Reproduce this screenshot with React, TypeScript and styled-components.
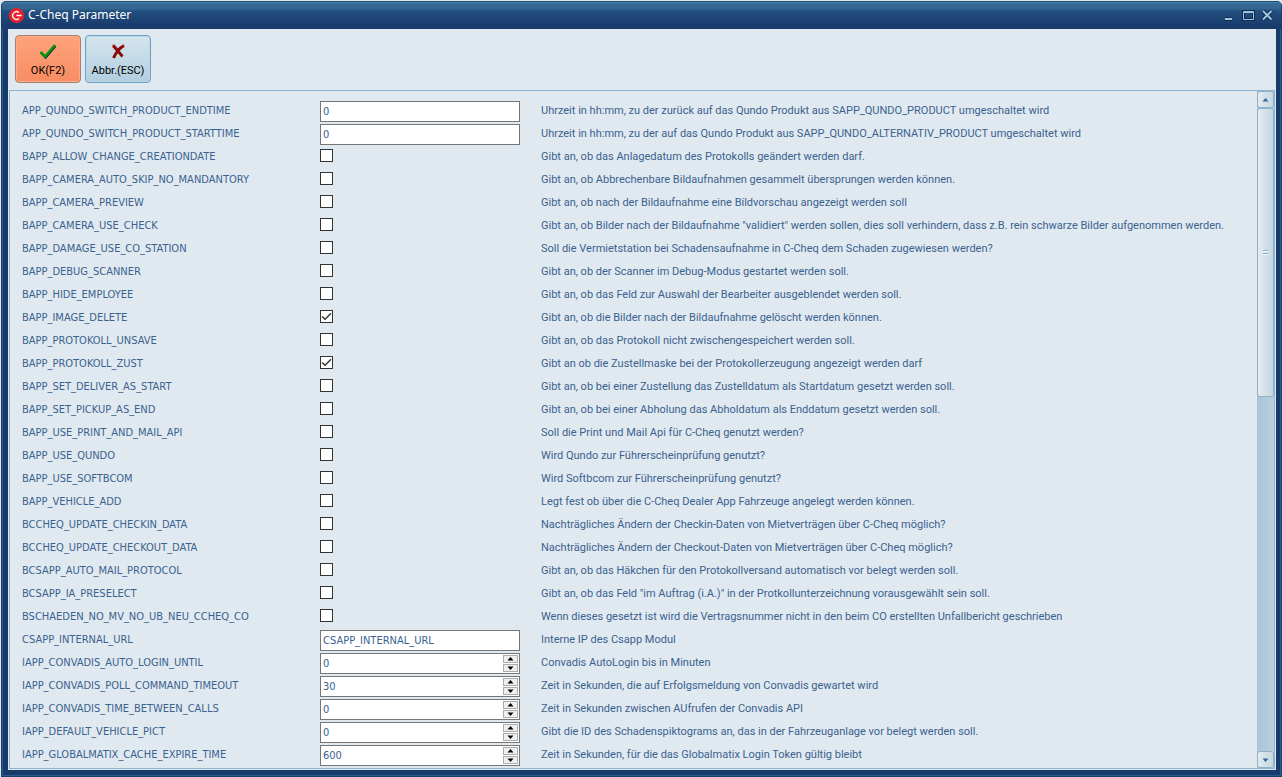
import React, { useState } from 'react';
import styled, { createGlobalStyle, css } from 'styled-components';

const GlobalStyle = createGlobalStyle`
  *, *::before, *::after { box-sizing: border-box; }
  html, body, #root { height: 100%; }
  body { margin: 0; overflow: hidden; background: #dfe8ec; }
`;

const labelFont = css`
  font-family: 'DejaVu Sans Condensed', 'Noto Sans', sans-serif;
  font-size: 11px;
`;

const Desktop = styled.div`
  height: 100vh;
  padding: 1px 0 0 1px;
  background: #dfe8ec;
`;

const Window = styled.section`
  display: flex;
  flex-direction: column;
  height: 100%;
  padding: 0 5px 6px 6px;
  border: 1px solid #17406f;
  border-top-color: #1d4a6c;
  border-radius: 5px 5px 0 0;
  background: #183b6b;
  box-shadow: inset 0 0 0 1px #2a5a8e;
`;

const TitleBar = styled.header`
  display: flex;
  align-items: center;
  flex: none;
  height: 27px;
  margin: 0 -5px 0 -6px;
  padding: 0 4px 2px 7px;
  gap: 4px;
  border-radius: 4px 4px 0 0;
  border-top: 1px solid #4a82a8;
  background: linear-gradient(#376b97 0, #33648f 6px, #234f80 8px, #1b3f70 20px, #1a3a6a 100%);
`;

const Title = styled.h1`
  flex: 1;
  margin: 0;
  color: #fff;
  font: 400 12px/16px 'Noto Sans', sans-serif;
`;

const Captions = styled.div`
  display: flex;
`;

const Caption = styled.button`
  display: flex;
  padding: 0;
  border: 0;
  background: none;
`;

const Body = styled.main`
  display: flex;
  flex-direction: column;
  flex: 1;
  min-height: 0;
  padding-bottom: 1px;
  background: #e1e9f0;
`;

const Toolbar = styled.div`
  display: flex;
  flex: none;
  gap: 4px;
  padding: 6px 7px 7px;
`;

const ToolButton = styled.button<{ $active?: boolean }>`
  display: flex;
  flex-direction: column;
  align-items: center;
  width: 66px;
  height: 48px;
  padding: 8px 0 0;
  gap: 5px;
  border: 1px solid ${p => (p.$active ? '#a97f72' : '#6f9fc3')};
  border-radius: 4px;
  color: #000;
  background: ${p => (p.$active
    ? 'linear-gradient(#fda27c, #fb9870 50%, #f78d62)'
    : 'linear-gradient(#d5e5ee, #c3dae7 50%, #b2cfdf)')};
  box-shadow: inset 0 0 0 1px ${p => (p.$active ? '#fbab8a' : '#bcd8e7')};
  font: 400 11px/14px Roboto, 'Liberation Sans', sans-serif;
`;

const Panel = styled.div`
  display: flex;
  flex: 1;
  min-height: 0;
  margin: 0 1px;
  border: 1px solid #8db3d0;
`;

const Rows = styled.div`
  flex: 1;
  min-width: 0;
  overflow: hidden;
  padding: 8px 0 0 12px;
`;

const Row = styled.div`
  display: grid;
  grid-template-columns: 298px 200px 1fr;
  height: 23px;
  padding-top: 2px;
  line-height: 20px;
  color: #39628f;
  white-space: nowrap;
`;

const Name = styled.label`
  ${labelFont}
`;

const Description = styled.span`
  padding-left: 21px;
  font-family: Roboto, 'Liberation Sans', sans-serif;
  font-size: 11px;
`;

const Field = styled.div`
  display: flex;
  height: 21px;
  border: 1px solid #767676;
  background: #fff;
`;

const TextInput = styled.input`
  flex: 1;
  min-width: 0;
  padding: 0 2px;
  border: 0;
  outline: 0;
  background: none;
  color: #39628f;
  ${labelFont}
  appearance: textfield;
  &::-webkit-inner-spin-button { appearance: none; margin: 0; }
`;

const Spinner = styled.div`
  display: flex;
  flex-direction: column;
  gap: 1px;
  padding: 1px;
`;

const SpinButton = styled.button`
  display: flex;
  align-items: center;
  justify-content: center;
  flex: 1;
  width: 15px;
  padding: 0;
  border: 1px solid #acacac;
  background: #efefef;
`;

const Check = styled.input`
  appearance: none;
  width: 13px;
  height: 13px;
  margin: 2px 0 0;
  border: 1px solid #333;
  background: #fff;
  &:checked {
    background: #fff url("data:image/svg+xml,%3Csvg xmlns='http://www.w3.org/2000/svg' viewBox='0 0 11 11'%3E%3Cpath d='M1 5.500 4 8.300 10 2.200' fill='none' stroke='%23333' stroke-width='1.4'/%3E%3C/svg%3E");
  }
`;

const Scrollbar = styled.div`
  display: flex;
  flex-direction: column;
  width: 17px;
  background: linear-gradient(90deg, #aac4d6, #b9d0df);
`;

const scrollPart = css`
  display: flex;
  align-items: center;
  justify-content: center;
  padding: 0;
  border: 1px solid #8fb2ca;
  border-radius: 3px;
  background: linear-gradient(90deg, #e4ecf2, #d3e0e8 50%, #c6d8e2);
`;

const ScrollButton = styled.button`
  ${scrollPart}
  flex: none;
  width: 17px;
  height: 17px;
`;

const Track = styled.div`
  flex: 1;
  min-height: 0;
`;

const Thumb = styled.div`
  ${scrollPart}
  height: 45%;
`;

type Kind = 'text' | 'check' | 'number';
type Param = [name: string, kind: Kind, value: string, description: string];

const params: Param[] = [
  ['APP_QUNDO_SWITCH_PRODUCT_ENDTIME', 'text', '0', 'Uhrzeit in hh:mm, zu der zurück auf das Qundo Produkt aus SAPP_QUNDO_PRODUCT umgeschaltet wird'],
  ['APP_QUNDO_SWITCH_PRODUCT_STARTTIME', 'text', '0', 'Uhrzeit in hh:mm, zu der auf das Qundo Produkt aus SAPP_QUNDO_ALTERNATIV_PRODUCT umgeschaltet wird'],
  ['BAPP_ALLOW_CHANGE_CREATIONDATE', 'check', '', 'Gibt an, ob das Anlagedatum des Protokolls geändert werden darf.'],
  ['BAPP_CAMERA_AUTO_SKIP_NO_MANDANTORY', 'check', '', 'Gibt an, ob Abbrechenbare Bildaufnahmen gesammelt übersprungen werden können.'],
  ['BAPP_CAMERA_PREVIEW', 'check', '', 'Gibt an, ob nach der Bildaufnahme eine Bildvorschau angezeigt werden soll'],
  ['BAPP_CAMERA_USE_CHECK', 'check', '', 'Gibt an, ob Bilder nach der Bildaufnahme "validiert" werden sollen, dies soll verhindern, dass z.B. rein schwarze Bilder aufgenommen werden.'],
  ['BAPP_DAMAGE_USE_CO_STATION', 'check', '', 'Soll die Vermietstation bei Schadensaufnahme in C-Cheq dem Schaden zugewiesen werden?'],
  ['BAPP_DEBUG_SCANNER', 'check', '', 'Gibt an, ob der Scanner im Debug-Modus gestartet werden soll.'],
  ['BAPP_HIDE_EMPLOYEE', 'check', '', 'Gibt an, ob das Feld zur Auswahl der Bearbeiter ausgeblendet werden soll.'],
  ['BAPP_IMAGE_DELETE', 'check', '1', 'Gibt an, ob die Bilder nach der Bildaufnahme gelöscht werden können.'],
  ['BAPP_PROTOKOLL_UNSAVE', 'check', '', 'Gibt an, ob das Protokoll nicht zwischengespeichert werden soll.'],
  ['BAPP_PROTOKOLL_ZUST', 'check', '1', 'Gibt an ob die Zustellmaske bei der Protokollerzeugung angezeigt werden darf'],
  ['BAPP_SET_DELIVER_AS_START', 'check', '', 'Gibt an, ob bei einer Zustellung das Zustelldatum als Startdatum gesetzt werden soll.'],
  ['BAPP_SET_PICKUP_AS_END', 'check', '', 'Gibt an, ob bei einer Abholung das Abholdatum als Enddatum gesetzt werden soll.'],
  ['BAPP_USE_PRINT_AND_MAIL_API', 'check', '', 'Soll die Print und Mail Api für C-Cheq genutzt werden?'],
  ['BAPP_USE_QUNDO', 'check', '', 'Wird Qundo zur Führerscheinprüfung genutzt?'],
  ['BAPP_USE_SOFTBCOM', 'check', '', 'Wird Softbcom zur Führerscheinprüfung genutzt?'],
  ['BAPP_VEHICLE_ADD', 'check', '', 'Legt fest ob über die C-Cheq Dealer App Fahrzeuge angelegt werden können.'],
  ['BCCHEQ_UPDATE_CHECKIN_DATA', 'check', '', 'Nachträgliches Ändern der Checkin-Daten von Mietverträgen über C-Cheq möglich?'],
  ['BCCHEQ_UPDATE_CHECKOUT_DATA', 'check', '', 'Nachträgliches Ändern der Checkout-Daten von Mietverträgen über C-Cheq möglich?'],
  ['BCSAPP_AUTO_MAIL_PROTOCOL', 'check', '', 'Gibt an, ob das Häkchen für den Protokollversand automatisch vor belegt werden soll.'],
  ['BCSAPP_IA_PRESELECT', 'check', '', 'Gibt an, ob das Feld "im Auftrag (i.A.)" in der Protkollunterzeichnung vorausgewählt sein soll.'],
  ['BSCHAEDEN_NO_MV_NO_UB_NEU_CCHEQ_CO', 'check', '', 'Wenn dieses gesetzt ist wird die Vertragsnummer nicht in den beim CO erstellten Unfallbericht geschrieben'],
  ['CSAPP_INTERNAL_URL', 'text', 'CSAPP_INTERNAL_URL', 'Interne IP des Csapp Modul'],
  ['IAPP_CONVADIS_AUTO_LOGIN_UNTIL', 'number', '0', 'Convadis AutoLogin bis in Minuten'],
  ['IAPP_CONVADIS_POLL_COMMAND_TIMEOUT', 'number', '30', 'Zeit in Sekunden, die auf Erfolgsmeldung von Convadis gewartet wird'],
  ['IAPP_CONVADIS_TIME_BETWEEN_CALLS', 'number', '0', 'Zeit in Sekunden zwischen AUfrufen der Convadis API'],
  ['IAPP_DEFAULT_VEHICLE_PICT', 'number', '0', 'Gibt die ID des Schadenspiktograms an, das in der Fahrzeuganlage vor belegt werden soll.'],
  ['IAPP_GLOBALMATIX_CACHE_EXPIRE_TIME', 'number', '600', 'Zeit in Sekunden, für die das Globalmatix Login Token gültig bleibt'],
];

function Arrow({ down, color = '#000' }: { down?: boolean; color?: string }) {
  return (
    <svg width="7" height="4" viewBox="0 0 7 4" aria-hidden="true">
      <path d={down ? 'M0.5 0.5h6L3.5 4z' : 'M0.5 3.5h6L3.5 0z'} fill={color} />
    </svg>
  );
}

// Every caption glyph is drawn twice: a dark halo, then the light strokes.
function CaptionIcon({ d }: { d: string }) {
  return (
    <svg width="19" height="16" viewBox="0 0 19 16" fill="none" aria-hidden="true">
      <path d={d} stroke="#10294e" strokeWidth="4" />
      <path d={d} stroke="#9fc5df" strokeWidth="2" />
    </svg>
  );
}

function ParamRow({ param: [name, kind, initial, description] }: { param: Param }) {
  const [value, setValue] = useState(initial);
  const step = (by: number) => setValue(v => String((Number(v) || 0) + by));
  return (
    <Row>
      <Name htmlFor={name}>{name}</Name>
      {kind === 'check' ? (
        <Check id={name} type="checkbox" checked={value === '1'} onChange={e => setValue(e.target.checked ? '1' : '')} />
      ) : (
        <Field>
          <TextInput id={name} type={kind} value={value} onChange={e => setValue(e.target.value)} />
          {kind === 'number' && (
            <Spinner>
              <SpinButton type="button" aria-label="Erhöhen" onClick={() => step(1)}><Arrow /></SpinButton>
              <SpinButton type="button" aria-label="Verringern" onClick={() => step(-1)}><Arrow down /></SpinButton>
            </Spinner>
          )}
        </Field>
      )}
      <Description>{description}</Description>
    </Row>
  );
}

export default function App() {
  return (
    <Desktop>
      <GlobalStyle />
      <Window>
        <TitleBar>
          <svg width="15" height="15" viewBox="0 0 15 15" aria-hidden="true">
            <circle cx="7.5" cy="7.5" r="7.5" fill="#e8202a" />
            <path d="M10 4.6A3.8 3.8 0 1 0 10 10.4M7.5 7.5h5" fill="none" stroke="#fff" strokeWidth="1.3" />
          </svg>
          <Title>C-Cheq Parameter</Title>
          <Captions>
            <Caption type="button" aria-label="Minimieren"><CaptionIcon d="M5 12h7" /></Caption>
            <Caption type="button" aria-label="Maximieren">
              <svg width="19" height="16" viewBox="0 0 19 16" fill="none" aria-hidden="true">
                <path d="M4.500 4.500h10v8h-10z" stroke="#10294e" strokeWidth="3" />
                <path d="M4.500 4.500h10v8h-10zM4.500 5.500h10" stroke="#9fc5df" />
              </svg>
            </Caption>
            <Caption type="button" aria-label="Schließen"><CaptionIcon d="M5 4l8.500 8.500M13.500 4l-8.500 8.500" /></Caption>
          </Captions>
        </TitleBar>
        <Body>
          <Toolbar>
            <ToolButton type="button" $active>
              <svg width="18" height="15" viewBox="0 0 18 15" fill="none" aria-hidden="true">
                <path d="M2 8.500l4.500 5L16.500 2" stroke="#0a2a50" strokeWidth="2.4" />
                <path d="M1.500 8l4.500 4.500L16 1" stroke="#0c960c" strokeWidth="2.6" />
              </svg>
              OK(F2)
            </ToolButton>
            <ToolButton type="button">
              <svg width="18" height="15" viewBox="0 0 18 15" fill="none" aria-hidden="true">
                <path d="M4 1.500c2.500 2 5 6 9.500 11M15 1.500C10.500 4 7 8.500 4.500 14" stroke="#8a0808" strokeWidth="3" />
                <path d="M3.500 1l2 1.500M15 1l-2 1.500" stroke="#d81616" />
              </svg>
              Abbr.(ESC)
            </ToolButton>
          </Toolbar>
          <Panel>
            <Rows>
              {params.map(p => <ParamRow key={p[0]} param={p} />)}
            </Rows>
            <Scrollbar>
              <ScrollButton type="button" aria-label="Nach oben"><Arrow color="#35689c" /></ScrollButton>
              <Track>
                <Thumb>
                  <svg width="5" height="5" viewBox="0 0 5 5" shapeRendering="crispEdges" aria-hidden="true">
                    <path d="M0 0h5v1H0zM0 3h5v1H0z" fill="#86adcb" />
                    <path d="M0 1h5v1H0zM0 4h5v1H0z" fill="#fff" />
                  </svg>
                </Thumb>
              </Track>
              <ScrollButton type="button" aria-label="Nach unten"><Arrow down color="#35689c" /></ScrollButton>
            </Scrollbar>
          </Panel>
        </Body>
      </Window>
    </Desktop>
  );
}
